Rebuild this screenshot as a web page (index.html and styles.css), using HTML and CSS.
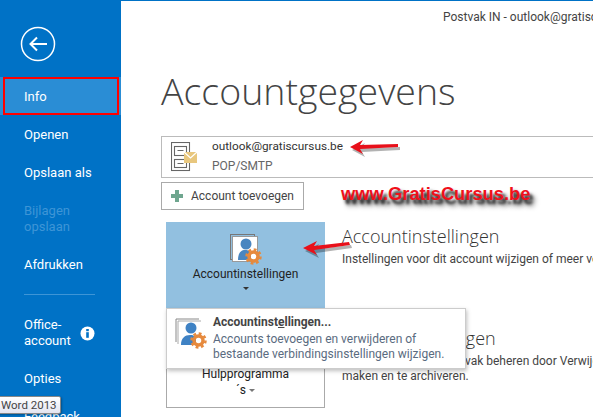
FILE: index.html
```html
<!DOCTYPE html>
<html lang="nl">
<head>
  <meta charset="UTF-8" />
  <title>Accountgegevens</title>
  <link rel="stylesheet" href="styles.css">
</head>
<body>
  <div class="window">
    <aside class="sidebar">
      <div class="back-wrap">
        <svg class="back" width="36" height="36" viewBox="0 0 36 36">
          <circle cx="18" cy="18" r="16.5" fill="none" stroke="#fff" stroke-width="1.5"/>
          <path d="M27 18H10.500M17 11.500l-6.500 6.500 6.500 6.500" fill="none" stroke="#fff" stroke-width="2"/>
        </svg>
      </div>
      <nav class="nav">
        <div class="nav-item active">Info</div>
        <div class="nav-item">Openen</div>
        <div class="nav-item">Opslaan als</div>
        <div class="nav-item disabled two-lines">Bijlagen<br>opslaan</div>
        <div class="nav-item">Afdrukken</div>
        <div class="nav-sep"></div>
        <div class="nav-item two-lines with-icon">
          <span>Office-<br>account</span>
          <svg width="15" height="15" viewBox="0 0 15 15">
            <circle cx="7.5" cy="7.5" r="7" fill="#fff"/>
            <rect x="6.2" y="6.2" width="2.6" height="5.6" fill="#0072c6"/>
            <rect x="6.2" y="3" width="2.6" height="2.2" fill="#0072c6"/>
          </svg>
        </div>
        <div class="nav-item">Opties</div>
        <div class="nav-item">Feedback</div>
      </nav>
    </aside>

    <main class="content">
      <div class="titlebar">Postvak IN - outlook@gratiscursus.be - Outlook</div>
      <h1>Accountgegevens</h1>

      <div class="account-box">
        <svg width="30" height="30" viewBox="0 0 30 30">
          <g fill="none" stroke="#666" stroke-width="1.1">
            <rect x="0.500" y="0.500" width="18" height="28"/>
            <rect x="3.500" y="4.500" width="12" height="9"/>
            <rect x="3.500" y="17.500" width="12" height="8"/>
            <path d="M6.500 8.500h6M6.500 21.500h6"/>
          </g>
          <rect x="13" y="10" width="13" height="11" fill="#e8c77e"/>
          <path d="M13 10l6.500 6 6.500-6" fill="none" stroke="#fff" stroke-width="1.2"/>
        </svg>
        <div class="account-text">
          <div class="account-mail">outlook@gratiscursus.be</div>
          <div class="account-type">POP/SMTP</div>
        </div>
      </div>

      <button class="add-btn">
        <svg width="12" height="12" viewBox="0 0 12 12"><path d="M4 0h4v4h4v4H8v4H4V8H0V4h4z" fill="#6fa68f"/></svg>
        Account toevoegen
      </button>

      <section class="info-row first">
        <div class="tile selected">
          <svg width="32" height="32" viewBox="0 0 32 32">
            <rect x="0.500" y="0.500" width="24" height="25" fill="none" stroke="#777"/>
            <rect x="2.500" y="2.500" width="25" height="25" fill="#fff" stroke="#999"/>
            <circle cx="16" cy="10" r="5.500" fill="#4a86c0"/>
            <path d="M8 26c0-7 3-10 7-10s5 2 6 4v6z" fill="#4a86c0"/>
            <circle cx="23.500" cy="22.500" r="4.500" fill="none" stroke="#e68a3e" stroke-width="3.500"/>
            <circle cx="23.500" cy="22.500" r="7" fill="none" stroke="#e68a3e" stroke-width="2.500" stroke-dasharray="2.800 2.700"/>
          </svg>
          <div class="tile-label">Accountinstellingen</div>
          <div class="caret dark"></div>
        </div>
        <div class="info-text">
          <h2>Accountinstellingen</h2>
          <p>Instellingen voor dit account wijzigen of meer verbindingen instellen.</p>
        </div>
      </section>

      <section class="info-row second">
        <div class="tile outline">
          <div class="tile-label">Hulpprogramma<br>´s <span class="caret small"></span></div>
        </div>
        <div class="info-text">
          <h2>Postvakinstellingen</h2>
          <p>De grootte van uw postvak beheren door Verwijderde items leeg te<br>maken en te archiveren.</p>
        </div>
      </section>

      <div class="popup">
        <svg width="32" height="32" viewBox="0 0 32 32">
          <path d="M1 24V1h23" fill="none" stroke="#888"/>
          <path d="M3 26V3h23" fill="none" stroke="#aaa"/>
          <circle cx="16" cy="10" r="5.500" fill="#3f82c4"/>
          <path d="M6 27c0-7 4-10 9-10s5 2 6 4v6z" fill="#3f82c4"/>
          <circle cx="23.500" cy="22.500" r="4.500" fill="none" stroke="#e68a3e" stroke-width="3.500"/>
          <circle cx="23.500" cy="22.500" r="7" fill="none" stroke="#e68a3e" stroke-width="2.500" stroke-dasharray="2.800 2.700"/>
        </svg>
        <div class="popup-text">
          <div class="popup-title">Accountinst<u>e</u>llingen...</div>
          <div class="popup-desc">Accounts toevoegen en verwijderen of<br>bestaande verbindingsinstellingen wijzigen.</div>
        </div>
      </div>
    </main>

    <!-- annotations on top of the screenshot -->
    <div class="mark-info"></div>
    <div class="watermark">www.GratisCursus.be</div>
    <svg class="arrow arrow-mail" width="56" height="20" viewBox="0 0 56 20">
      <path d="M2 8l13-7-3 5 38-1v3l-38 2 3 5z" fill="#000" opacity=".3" transform="translate(2 3)"/>
      <path d="M2 8l13-7-3 5 38-1v3l-38 2 3 5z" fill="#e8101a"/>
    </svg>
    <svg class="arrow arrow-tile" width="52" height="22" viewBox="0 0 52 22">
      <path d="M1 10l14-7-3 5 35-4 1 3-36 5 3 5z" fill="#000" opacity=".3" transform="translate(2 3)"/>
      <path d="M1 10l14-7-3 5 35-4 1 3-36 5 3 5z" fill="#e8101a"/>
    </svg>
    <div class="tooltip">Word 2013</div>
  </div>
</body>
</html>
```

FILE: styles.css
```css
body {
  margin: 0;
  font-family: 'Roboto', sans-serif;
  background: #fff;
}

.window {
  position: relative;
  display: flex;
  width: 593px;
  height: 417px;
  overflow: hidden;
}

/* left backstage menu */
.sidebar {
  flex: 0 0 121px;
  background: #0072c6;
  color: #fff;
}

.back-wrap {
  height: 77px;
  padding: 26px 0 0 20px;
  box-sizing: border-box;
}

.back {
  display: block;
}

.nav-item {
  display: flex;
  align-items: center;
  height: 38px;
  box-sizing: border-box;
  padding: 2px 0 0 24px;
  font-size: 13px;
  line-height: 16px;
}

.nav-item.active {
  background: #2a8dd5;
}

.nav-item.disabled {
  color: #3e95d6;
}

.nav-item.two-lines {
  height: 54px;
}

.nav-item.with-icon {
  justify-content: space-between;
  padding-right: 26px;
}

.nav-sep {
  height: 1px;
  margin: 11px 26px 10px 24px;
  background: #3e95d6;
}

/* main pane */
.content {
  position: relative;
  flex: 1;
  min-width: 0;
  border-top: 1px solid #0072c6;
  padding-left: 40px;
  color: #444;
}

.titlebar {
  padding: 9px 0 0 282px;
  height: 21px;
  font-size: 12px;
  color: #444;
  white-space: nowrap;
}

h1 {
  margin: 34px 0 0;
  font-family: 'Open Sans', sans-serif;
  font-weight: 300;
  font-size: 37.5px;
  line-height: 52px;
  color: #444;
  white-space: nowrap;
}

.account-box {
  display: flex;
  align-items: center;
  gap: 11px;
  height: 42px;
  margin-top: 19px;
  margin-right: -20px;
  padding-left: 9px;
  box-sizing: border-box;
  border: 1px solid #bbb;
}

.account-mail {
  font-size: 11.8px;
  line-height: 18px;
  color: #333;
}

.account-type {
  font-size: 12px;
  line-height: 22px;
  color: #666;
}

.add-btn {
  display: flex;
  align-items: center;
  gap: 8px;
  width: 143px;
  height: 28px;
  margin-top: 4px;
  padding: 0 0 0 9px;
  border: 1px solid #aaa;
  background: #fff;
  font-family: inherit;
  font-size: 12px;
  color: #444;
}

.info-row {
  display: flex;
  margin-left: 5px;
}

.info-row.first {
  margin-top: 12px;
  height: 86px;
}

.info-row.second {
  height: 100px;
}

.tile {
  flex: 0 0 159px;
  box-sizing: border-box;
  display: flex;
  flex-direction: column;
  align-items: center;
  text-align: center;
  font-size: 12px;
  color: #222;
}

.tile.selected {
  background: #92c0e0;
  padding-top: 12px;
}

.tile.outline {
  justify-content: flex-end;
  border: 1px solid #aaa;
  border-top: none;
  padding-bottom: 9px;
}

.tile-label {
  line-height: 16px;
}

.caret {
  display: inline-block;
  width: 0;
  height: 0;
  border-left: 3px solid transparent;
  border-right: 3px solid transparent;
  border-top: 3px solid #777;
  vertical-align: middle;
}

.caret.dark {
  margin-top: 5px;
  border-top-color: #333;
}

.info-text {
  margin-left: 17px;
  white-space: nowrap;
}

.info-text h2 {
  margin: 0;
  font-family: 'Open Sans', sans-serif;
  font-weight: 300;
  font-size: 18px;
  line-height: 26px;
  color: #333;
}

.info-text p {
  margin: 3px 0 0;
  font-size: 12px;
  line-height: 15px;
  color: #444;
}

.first .info-text {
  padding-top: 1px;
}

.second .info-text {
  padding-top: 17px;
}

.popup {
  position: absolute;
  left: 45px;
  top: 307px;
  display: flex;
  gap: 6px;
  width: 300px;
  height: 61px;
  box-sizing: border-box;
  padding: 9px 8px;
  background: #fff;
  border: 1px solid #ccc;
  box-shadow: 1px 2px 4px rgba(0, 0, 0, 0.25);
}

.popup-text {
  margin-top: -3px;
}

.popup-title {
  font-size: 12px;
  font-weight: 700;
  line-height: 15px;
  color: #444;
}

.popup-desc {
  margin-top: 2px;
  font-size: 12px;
  line-height: 15px;
  color: #5a6b80;
  white-space: nowrap;
}

/* annotations */
.mark-info {
  position: absolute;
  left: 3px;
  top: 77px;
  width: 116px;
  height: 38px;
  box-sizing: border-box;
  border: 2px solid #f00;
}

.watermark {
  position: absolute;
  left: 341px;
  top: 182px;
  font-family: 'Liberation Sans', sans-serif;
  font-weight: 700;
  font-size: 18.3px;
  line-height: 24px;
  color: #f0101a;
  text-shadow: 3px 4px 3px #222, 5px 6px 5px #666;
  white-space: nowrap;
}

.arrow {
  position: absolute;
}

.arrow-mail {
  left: 348px;
  top: 139px;
}

.arrow-tile {
  left: 302px;
  top: 238px;
}

.tooltip {
  position: absolute;
  left: -8px;
  top: 396px;
  width: 69px;
  height: 18px;
  padding-left: 8px;
  box-sizing: border-box;
  border: 1px solid #888;
  border-radius: 2px;
  background: linear-gradient(#fff, #e4e5f0);
  box-shadow: 1px 1px 2px rgba(0, 0, 0, 0.3);
  font-size: 11.5px;
  line-height: 16px;
  color: #444;
  white-space: nowrap;
}
```
